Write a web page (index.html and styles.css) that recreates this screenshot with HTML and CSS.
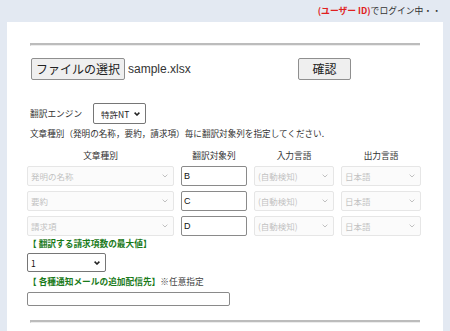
FILE: index.html
```html
<!DOCTYPE html>
<html lang="ja">
<head>
<meta charset="UTF-8">
<meta name="viewport" content="width=device-width, initial-scale=1.0">
<title>翻訳ファイル登録</title>
<link rel="stylesheet" href="styles.css">
</head>
<body>

<div class="topBar">
  <span class="userName">(ユーザー ID)</span>でログイン中・・
</div>

<div class="panel">
  <div class="rule"></div>

  <div class="fileRow">
    <div class="filePick">
      <button class="fileButton">ファイルの選択</button>
      <span class="fileName">sample.xlsx</span>
    </div>
    <button class="confirmButton">確認</button>
  </div>

  <div class="engineRow">
    <span class="engineLabel">翻訳エンジン</span>
    <select class="engineSelect">
      <option>特許NT</option>
    </select>
  </div>

  <p class="note">文章種別（発明の名称，要約，請求項）毎に翻訳対象列を指定してください.</p>

  <div class="colGrid">
    <div class="colHead">文章種別</div>
    <div class="colHead">翻訳対象列</div>
    <div class="colHead">入力言語</div>
    <div class="colHead">出力言語</div>

    <select class="pick" disabled><option>発明の名称</option></select>
    <input class="colInput" type="text" value="B">
    <select class="pick" disabled><option>(自動検知)</option></select>
    <select class="pick" disabled><option>日本語</option></select>

    <select class="pick" disabled><option>要約</option></select>
    <input class="colInput" type="text" value="C">
    <select class="pick" disabled><option>(自動検知)</option></select>
    <select class="pick" disabled><option>日本語</option></select>

    <select class="pick" disabled><option>請求項</option></select>
    <input class="colInput" type="text" value="D">
    <select class="pick" disabled><option>(自動検知)</option></select>
    <select class="pick" disabled><option>日本語</option></select>
  </div>

  <div class="greenLabel">【 翻訳する請求項数の最大値】</div>
  <select class="maxSelect">
    <option>1</option>
  </select>

  <div class="greenLabel mailLabel">【 各種通知メールの追加配信先】<span class="optional">※任意指定</span></div>
  <input class="mailInput" type="text">

  <div class="rule bottomRule"></div>
</div>

</body>
</html>
```

FILE: styles.css
```css
body {
  margin: 0;
  background-color: #e3e9f2;
  font-family: "Liberation Sans", "Noto Sans CJK JP", sans-serif;
  color: #333333;
  overflow: hidden;
}

.topBar {
  height: 22px;
  line-height: 22px;
  text-align: right;
  padding-right: 9px;
  font-size: 8.8px;
  font-family: "Noto Sans CJK JP", sans-serif;
}

.userName {
  color: #e02020;
  font-weight: bold;
}

.panel {
  margin-left: 7px;
  width: 436px;
  height: 309px;
  background-color: #ffffff;
  padding: 21px 20px 0 20px;
  box-sizing: border-box;
  overflow: hidden;
}

.rule {
  margin: 0 3px;
  height: 0;
  border-top: 2px solid #bcbcbc;
  border-bottom: 1px solid #ececec;
  border-left: 1px solid #bcbcbc;
}

.fileRow {
  display: flex;
  align-items: center;
  margin-top: 12px;
  margin-left: 4px;
}

.filePick {
  width: 267px;
  display: flex;
  align-items: center;
}

.fileButton,
.confirmButton {
  height: 22px;
  font-size: 12px;
  font-family: "Noto Sans CJK JP", sans-serif;
  color: #222222;
  background-color: #efefef;
  border: 1px solid #8f8f8f;
  border-radius: 2px;
  padding: 0;
  line-height: 18px;
}

.fileButton {
  width: 94px;
}

.confirmButton {
  width: 53px;
}

.fileName {
  margin-left: 3px;
  font-size: 12px;
  color: #333333;
}

.engineRow {
  display: flex;
  align-items: center;
  margin-top: 23px;
  margin-left: 3px;
}

.engineLabel {
  font-size: 8.7px;
  font-family: "Noto Sans CJK JP", sans-serif;
  width: 63px;
}

/* selects drawn without the native arrow, chevron comes from the svg */
.engineSelect,
.maxSelect,
.pick {
  appearance: none;
  -webkit-appearance: none;
  font-family: "Noto Sans CJK JP", sans-serif;
  font-size: 8.5px;
  border-radius: 2px;
  background-repeat: no-repeat;
  background-position: right 5px center;
}

.engineSelect,
.maxSelect {
  color: #222222;
  border: 1px solid #767676;
  background-color: #ffffff;
  background-image: url("data:image/svg+xml,%3Csvg xmlns='http://www.w3.org/2000/svg' width='6' height='4'%3E%3Cpath d='M0.6 0.6 L3 3 L5.4 0.6' fill='none' stroke='%23222' stroke-width='1.5'/%3E%3C/svg%3E");
}

.engineSelect {
  width: 53px;
  height: 21px;
  padding: 0 0 0 7px;
}

.note {
  margin: 3px 0 0 3px;
  font-size: 8.6px;
  line-height: 12px;
  font-family: "Noto Sans CJK JP", sans-serif;
}

.colGrid {
  display: grid;
  grid-template-columns: 147px 66px 80px 80px;
  column-gap: 7px;
  row-gap: 5px;
  margin-top: 11px;
}

.colHead {
  text-align: center;
  font-size: 8.7px;
  line-height: 12px;
  font-family: "Noto Sans CJK JP", sans-serif;
  margin-bottom: -1px;
}

.pick {
  height: 20px;
  color: #a8a8a8;
  background-color: #fafafa;
  border: 1px solid #dcdcdc;
  padding: 0 0 0 3px;
  background-image: url("data:image/svg+xml,%3Csvg xmlns='http://www.w3.org/2000/svg' width='6' height='4'%3E%3Cpath d='M0.6 0.6 L3 3 L5.4 0.6' fill='none' stroke='%23a8a8a8' stroke-width='1'/%3E%3C/svg%3E");
}

.colInput {
  height: 20px;
  box-sizing: border-box;
  font-size: 9px;
  color: #111111;
  border: 1px solid #8a8a8a;
  border-radius: 2px;
  padding: 0 2px;
}

.greenLabel {
  margin-top: 2px;
  margin-left: 1px;
  font-size: 8.7px;
  line-height: 12px;
  font-weight: bold;
  color: #1a7a1a;
  font-family: "Noto Sans CJK JP", sans-serif;
}

.mailLabel {
  margin-top: 4px;
}

.optional {
  font-weight: normal;
  color: #444444;
}

.maxSelect {
  display: block;
  margin-top: 3px;
  width: 79px;
  height: 19px;
  color: #111111;
  padding: 0 0 0 3px;
}

.mailInput {
  display: block;
  margin-top: 4px;
  width: 203px;
  height: 14px;
  box-sizing: border-box;
  border: 1px solid #8a8a8a;
  border-radius: 2px;
}

.bottomRule {
  margin-top: 14px;
}
```
